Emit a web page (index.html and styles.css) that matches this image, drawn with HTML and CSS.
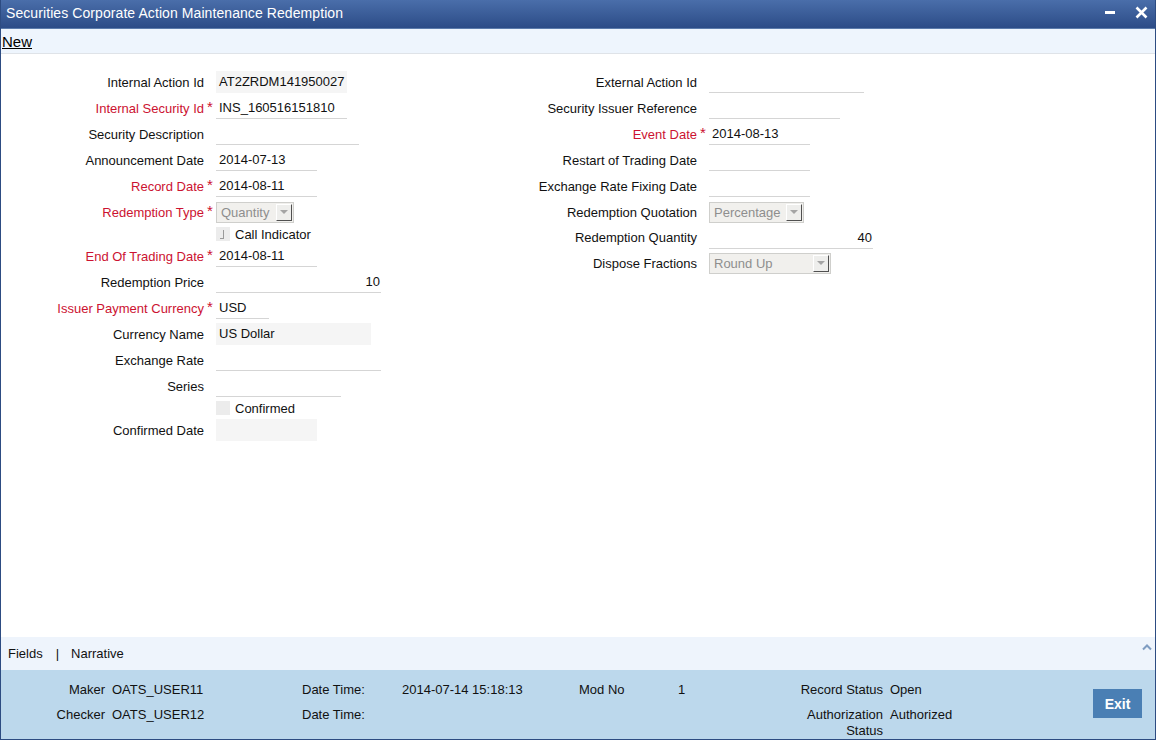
FILE: index.html
```html
<!DOCTYPE html>
<html lang="en">
  <head>
    <meta charset="UTF-8" />
    <title>Securities Corporate Action Maintenance Redemption</title>
    <link rel="stylesheet" href="styles.css">
  </head>
  <body>
    <div class="window">
      <div class="titlebar">
        <span class="title">Securities Corporate Action Maintenance Redemption</span>
        <svg class="win-min" width="10" height="16" viewBox="0 0 10 16"><rect x="0" y="6" width="10" height="3" fill="#fff"/></svg>
        <svg class="win-close" width="13" height="16" viewBox="0 0 13 16"><path d="M1.5 2.5 L11.5 12.5 M11.5 2.5 L1.5 12.5" stroke="#fff" stroke-width="2.6" fill="none"/></svg>
      </div>

      <div class="toolbar">
        <a href="#">New</a>
      </div>

      <div class="form">
        <div class="col">
          <div class="row">
            <span class="lbl">Internal Action Id</span><span class="req"></span>
            <span class="fld ro" style="width:131px">AT2ZRDM141950027</span>
          </div>
          <div class="row">
            <span class="lbl mand">Internal Security Id</span><span class="req">*</span>
            <span class="fld" style="width:131px">INS_160516151810</span>
          </div>
          <div class="row">
            <span class="lbl">Security Description</span><span class="req"></span>
            <span class="fld" style="width:143px"></span>
          </div>
          <div class="row">
            <span class="lbl">Announcement Date</span><span class="req"></span>
            <span class="fld" style="width:101px">2014-07-13</span>
          </div>
          <div class="row">
            <span class="lbl mand">Record Date</span><span class="req">*</span>
            <span class="fld" style="width:101px">2014-08-11</span>
          </div>
          <div class="row">
            <span class="lbl mand">Redemption Type</span><span class="req">*</span>
            <span class="sel" style="width:78px"><span class="sel-text">Quantity</span><span class="sel-btn"></span></span>
          </div>
          <div class="row short">
            <span class="lbl"></span><span class="req"></span>
            <span class="chk"><span class="chk-mark"></span></span><span class="chk-text">Call Indicator</span>
          </div>
          <div class="row">
            <span class="lbl mand">End Of Trading Date</span><span class="req">*</span>
            <span class="fld" style="width:101px">2014-08-11</span>
          </div>
          <div class="row">
            <span class="lbl">Redemption Price</span><span class="req"></span>
            <span class="fld num" style="width:165px">10</span>
          </div>
          <div class="row">
            <span class="lbl mand">Issuer Payment Currency</span><span class="req">*</span>
            <span class="fld" style="width:53px">USD</span>
          </div>
          <div class="row">
            <span class="lbl">Currency Name</span><span class="req"></span>
            <span class="fld ro" style="width:155px">US Dollar</span>
          </div>
          <div class="row">
            <span class="lbl">Exchange Rate</span><span class="req"></span>
            <span class="fld" style="width:165px"></span>
          </div>
          <div class="row">
            <span class="lbl">Series</span><span class="req"></span>
            <span class="fld" style="width:125px"></span>
          </div>
          <div class="row short">
            <span class="lbl"></span><span class="req"></span>
            <span class="chk"></span><span class="chk-text">Confirmed</span>
          </div>
          <div class="row">
            <span class="lbl">Confirmed Date</span><span class="req"></span>
            <span class="fld ro" style="width:101px"></span>
          </div>
        </div>

        <div class="col">
          <div class="row">
            <span class="lbl">External Action Id</span><span class="req"></span>
            <span class="fld" style="width:155px"></span>
          </div>
          <div class="row">
            <span class="lbl">Security Issuer Reference</span><span class="req"></span>
            <span class="fld" style="width:131px"></span>
          </div>
          <div class="row">
            <span class="lbl mand">Event Date</span><span class="req">*</span>
            <span class="fld" style="width:101px">2014-08-13</span>
          </div>
          <div class="row">
            <span class="lbl">Restart of Trading Date</span><span class="req"></span>
            <span class="fld" style="width:101px"></span>
          </div>
          <div class="row">
            <span class="lbl">Exchange Rate Fixing Date</span><span class="req"></span>
            <span class="fld" style="width:101px"></span>
          </div>
          <div class="row">
            <span class="lbl">Redemption Quotation</span><span class="req"></span>
            <span class="sel" style="width:95px"><span class="sel-text">Percentage</span><span class="sel-btn"></span></span>
          </div>
          <div class="row row-tight">
            <span class="lbl">Redemption Quantity</span><span class="req"></span>
            <span class="fld num" style="width:164px">40</span>
          </div>
          <div class="row">
            <span class="lbl">Dispose Fractions</span><span class="req"></span>
            <span class="sel" style="width:122px"><span class="sel-text">Round Up</span><span class="sel-btn"></span></span>
          </div>
        </div>
      </div>

      <div class="tabs">
        <a href="#">Fields</a>
        <span class="sep">|</span>
        <a href="#">Narrative</a>
        <svg class="caret" width="10" height="8" viewBox="0 0 10 8"><path d="M1 6.5 L5 2.5 L9 6.5" stroke="#7f9dc2" stroke-width="2" fill="none"/></svg>
      </div>

      <div class="audit">
        <div class="audit-grid">
          <span class="a-lbl">Maker</span>
          <span class="a-val">OATS_USER11</span>
          <span>Date Time:</span>
          <span>2014-07-14 15:18:13</span>
          <span>Mod No</span>
          <span>1</span>
          <span class="a-lbl">Record Status</span>
          <span class="a-val">Open</span>

          <span class="a-lbl">Checker</span>
          <span class="a-val">OATS_USER12</span>
          <span>Date Time:</span>
          <span></span>
          <span></span>
          <span></span>
          <span class="a-lbl">Authorization Status</span>
          <span class="a-val">Authorized</span>
        </div>
        <button class="exit-button">Exit</button>
      </div>
    </div>
  </body>
</html>
```

FILE: styles.css
```css
body {
  margin: 0;
  font-family: "Liberation Sans", Arial, sans-serif;
  font-size: 13px;
  color: #111;
  background-color: #fff;
}

.window {
  height: 740px;
  box-sizing: border-box;
  border: 1px solid #2d4c82;
  border-top: none;
  display: flex;
  flex-direction: column;
}

.titlebar {
  height: 29px;
  flex-shrink: 0;
  display: flex;
  align-items: center;
  padding: 0 7px 2px 5px;
  box-sizing: border-box;
  background: linear-gradient(#4a6eaa, #2c4c87);
  border-bottom: 1px solid #5b7bab;
  color: #fff;
  font-size: 14px;
}

.title {
  flex: 1;
  letter-spacing: 0.08px;
}

.win-min {
  margin-right: 20px;
}

.toolbar {
  height: 25px;
  flex-shrink: 0;
  box-sizing: border-box;
  display: flex;
  align-items: center;
  padding-left: 1px;
  background-color: #eef5fd;
  border-bottom: 1px solid #dfe3e8;
}

.toolbar a {
  font-size: 15px;
  color: #000;
  text-decoration: underline;
}

.form {
  flex: 1;
  display: flex;
  padding-top: 15px;
}

.col {
  width: 493px;
}

.row {
  display: flex;
  align-items: center;
  height: 26px;
}

.row.short {
  height: 18px;
}

.row.row-tight {
  height: 25px;
}

.lbl {
  width: 203px;
  text-align: right;
  white-space: nowrap;
}

.lbl.mand {
  color: #cc1231;
}

.req {
  width: 12px;
  text-align: center;
  color: #cc1231;
  font-size: 15px;
  padding-bottom: 4px;
}

.fld {
  height: 22px;
  box-sizing: border-box;
  padding: 0 3px;
  line-height: 21px;
  border-bottom: 1px solid #d5d5d5;
  white-space: nowrap;
}

.fld.ro {
  background-color: #f5f5f5;
  border-bottom-color: #f5f5f5;
}

.fld.num {
  text-align: right;
  padding-right: 1px;
}

.sel {
  height: 21px;
  box-sizing: border-box;
  display: flex;
  align-items: center;
  justify-content: space-between;
  padding: 0 1px 0 4px;
  background-color: #f1f0ed;
  border: 1px solid #cfcfcc;
  color: #8e8e8e;
}

.sel-btn {
  width: 16px;
  height: 17px;
  box-sizing: border-box;
  border: 1px solid #fff;
  border-right-color: #505050;
  border-bottom-color: #505050;
  background-color: #eeeeec;
  display: flex;
  align-items: center;
  justify-content: center;
}

.sel-btn::after {
  content: "";
  border-left: 4px solid transparent;
  border-right: 4px solid transparent;
  border-top: 4px solid #a4a4a4;
}

.chk {
  width: 14px;
  height: 14px;
  background-color: #ececec;
  display: flex;
  justify-content: center;
  align-items: center;
}

.chk-mark {
  width: 3px;
  height: 8px;
  border-right: 1px solid #9a9a9a;
  border-bottom: 1px solid #9a9a9a;
  margin-right: 2px;
}

.chk-text {
  margin-left: 5px;
}

.tabs {
  height: 33px;
  flex-shrink: 0;
  display: flex;
  align-items: center;
  padding-left: 7px;
  background-color: #eef4fc;
}

.tabs a {
  color: #111;
  text-decoration: none;
}

.tabs .sep {
  margin: 0 12px 0 13px;
}

.caret {
  margin-left: auto;
  margin-right: 3px;
  align-self: flex-start;
  margin-top: 6px;
}

.audit {
  height: 69px;
  flex-shrink: 0;
  display: flex;
  align-items: flex-start;
  background-color: #bcd8ec;
}

.audit-grid {
  display: grid;
  grid-template-columns: 104px 197px 100px 177px 99px 115px 90px 120px;
  row-gap: 9px;
  align-items: start;
  line-height: 16px;
  padding-top: 12px;
}

.a-lbl {
  text-align: right;
}

.a-val {
  padding-left: 7px;
}

.exit-button {
  margin: 19px 13px 0 auto;
  width: 49px;
  height: 29px;
  border: none;
  background-color: #4a7fb4;
  color: #fff;
  font-family: "Liberation Sans", Arial, sans-serif;
  font-weight: bold;
  font-size: 14px;
  cursor: pointer;
}
```
